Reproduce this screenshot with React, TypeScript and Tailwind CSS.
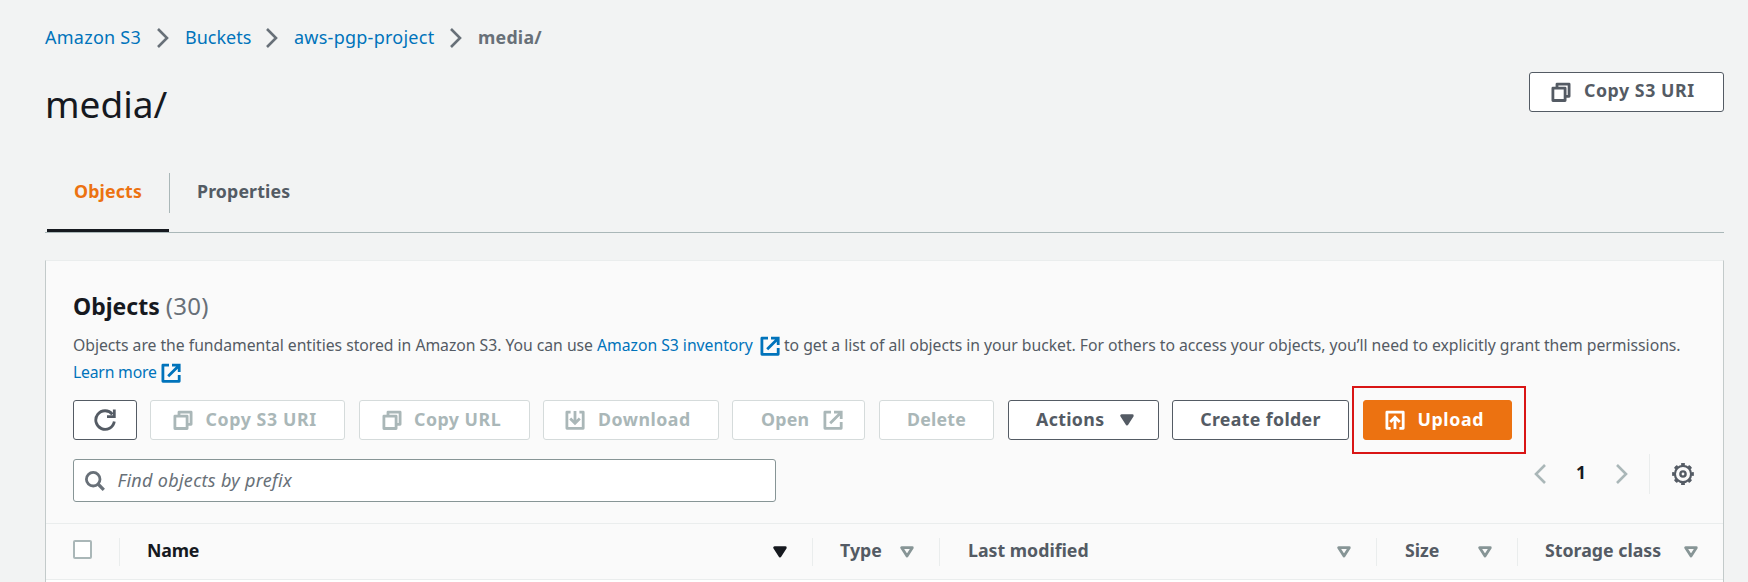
import type { ReactNode } from 'react';

type IconProps = { className?: string };

function Svg({ className = '', size = 20, box = 20, children }: IconProps & { size?: number; box?: number; children: ReactNode }) {
  return (
    <svg className={`shrink-0 ${className}`} width={size} height={size} viewBox={`0 0 ${box} ${box}`} fill="none" stroke="currentColor" strokeWidth={2.8}>
      {children}
    </svg>
  );
}

const CopyIcon = ({ className }: IconProps) => (
  <Svg className={className}>
    <path d="M6 5.6V2.2h12.1v12.1h-3.6" strokeLinejoin="round" />
    <path d="M1.9 6.2h12.2v12.3H1.9z" strokeLinejoin="round" />
  </Svg>
);

const ExternalIcon = ({ className }: IconProps) => (
  <Svg className={className}>
    <path d="M8 2.2H1.9v16.1h16.3V12" strokeLinejoin="round" />
    <path d="M11 2.2h7.2V9M7.2 13.2L18 2.4" />
  </Svg>
);

const DownloadIcon = ({ className }: IconProps) => (
  <Svg className={className}>
    <path d="M5.6 2.2H1.9v16.1h16.3V2.2h-3.8" strokeLinejoin="round" />
    <path d="M10 1v12M5.2 8.4l4.8 4.8 4.8-4.8" />
  </Svg>
);

const UploadIcon = ({ className }: IconProps) => (
  <Svg className={className}>
    <path d="M5.6 18.3H1.9V2.2h16.3v16.1h-3.8" strokeLinejoin="round" />
    <path d="M10 19V7.5M5.2 12l4.8-4.8 4.8 4.8" />
  </Svg>
);

const RefreshIcon = () => (
  <Svg size={22} box={22}>
    <path d="M20.3 12.5A9.3 9.3 0 1 1 18.4 5.3" />
    <path d="M20.3 0.5v7.2h-7.3" />
  </Svg>
);

const SearchIcon = ({ className }: IconProps) => (
  <Svg className={className}>
    <circle cx="8.2" cy="8.2" r="6.8" />
    <path d="M13 13l5.8 5.8" strokeWidth={3.2} />
  </Svg>
);

const GearIcon = () => (
  <Svg size={22} box={22}>
    <circle cx="11" cy="11" r="8.1" strokeWidth={2.2} />
    <circle cx="11" cy="11" r="9.8" strokeWidth={2.2} pathLength={80} strokeDasharray="5 5" strokeDashoffset={2.5} />
    <circle cx="11" cy="11" r="2.6" strokeWidth={2.4} />
  </Svg>
);

function Chevron({ flip = false, className = '' }: { flip?: boolean; className?: string }) {
  return (
    <svg className={`shrink-0 ${className}`} width="12" height="20" viewBox="0 0 12 20" fill="none" stroke="currentColor" strokeWidth="2.6">
      <path d={flip ? 'M11 1L2 10l9 9' : 'M1 1l9 9-9 9'} />
    </svg>
  );
}

function Caret({ hollow = false, className = '' }: { hollow?: boolean; className?: string }) {
  return (
    <svg className={`shrink-0 ${className}`} width="14" height="12" viewBox="0 0 14 12" fill={hollow ? 'none' : 'currentColor'} stroke="currentColor" strokeWidth="2.8" strokeLinejoin="round">
      <path d="M1.7 1.7h10.6L7 10z" />
    </svg>
  );
}

type ButtonProps = { variant?: 'normal' | 'disabled' | 'primary'; className: string; children: ReactNode };

function Button({ variant = 'normal', className, children }: ButtonProps) {
  const look = {
    normal: 'border-[#545b64] bg-white text-[#545b64]',
    disabled: 'border-[#d5dbdb] bg-white text-[#aab7b8]',
    primary: 'border-[#ec7211] bg-[#ec7211] text-white',
  }[variant];
  return (
    <button className={`flex h-10 shrink-0 items-center rounded-[3px] border text-[17.75px] leading-none font-bold whitespace-nowrap ${look} ${className}`}>
      {children}
    </button>
  );
}

function Crumb({ className, textClass = '', children }: { className: string; textClass?: string; children: ReactNode }) {
  return (
    <li className={`flex items-center justify-between ${className}`}>
      <a className={`pb-0.5 text-[#0073bb] ${textClass}`}>{children}</a>
      <Chevron className="mr-4 text-[#687078]" />
    </li>
  );
}

function HeaderCell({ className, textClass = '', active = false, last = false, children }: { className: string; textClass?: string; active?: boolean; last?: boolean; children: ReactNode }) {
  return (
    <div className={`flex h-7 items-center justify-between pl-[27px] ${last ? '' : 'border-r border-[#eaeded] pr-[25px]'} ${className}`}>
      <span className={`pb-px ${active ? 'text-[#16191f]' : 'text-[#545b64]'} ${textClass}`}>{children}</span>
      <Caret hollow={!active} className={active ? 'text-[#16191f]' : 'text-[#879596]'} />
    </div>
  );
}

export default function App() {
  return (
    <div className="flex h-[582px] w-[1748px] flex-col overflow-hidden bg-[#f2f3f3] pr-6 pl-[45px] font-['Noto_Sans','Open_Sans',sans-serif] text-[#16191f]">
      <nav className="h-[61px] pt-[25px]">
        <ol className="flex h-[26px] items-center text-[18px] leading-[26px] tracking-[0.25px] whitespace-nowrap">
          <Crumb className="w-[140px]">Amazon S3</Crumb>
          <Crumb className="w-[109px]" textClass="tracking-[0px]">Buckets</Crumb>
          <Crumb className="w-[184px]">aws-pgp-project</Crumb>
          <li className="pb-0.5 text-[17.75px] font-bold text-[#687078]">media/</li>
        </ol>
      </nav>

      <header className="flex h-[109px] items-start justify-between">
        <h1 className="pt-[19px] text-[37px] leading-[48px]">media/</h1>
        <Button className="mt-[11px] w-[195px] pl-[21px] tracking-[0.55px]">
          <CopyIcon />
          <span className="ml-[13px] pb-0.5">Copy S3 URI</span>
        </Button>
      </header>

      <div className="flex h-[63px] border-b border-[#aab7b8] pl-0.5 text-[17.75px] font-bold">
        <div className="flex w-[123px] flex-col justify-between">
          <div className="mt-[3px] flex h-10 items-center border-r border-[#aab7b8] pb-[3px] pl-[27px] leading-none tracking-[0.15px] text-[#ec7211]">Objects</div>
          <div className="h-[3px] w-[122px] bg-[#16191f]" />
        </div>
        <div className="mt-[3px] flex h-10 items-center pb-[3px] pl-[27px] leading-none tracking-[0.12px] text-[#545b64]">Properties</div>
      </div>

      <main className="mt-[27px] flex flex-1 flex-col border-x border-t border-x-[#c3caca] border-t-[#eaeded] bg-white">
        <section className="h-[263px] shrink-0 border-b border-[#eaeded] bg-[#fafafa] px-[27px]">
          <h2 className="pt-[29px] text-[23px] leading-8 font-bold">
            Objects <span className="text-[24px] font-normal tracking-[0.3px] text-[#687078]">(30)</span>
          </h2>
          <p className="mt-[10px] text-[15.75px] leading-[27px] tracking-[-0.03px] whitespace-nowrap text-[#545b64]">
            Objects are the fundamental entities stored in Amazon S3. You can use{' '}
            <a className="text-[#0073bb]">Amazon S3 inventory <ExternalIcon className="ml-[3px] inline-block align-[-5px]" /></a>
            {' '}to get a list of all objects in your bucket. For others to access your objects, you’ll need to explicitly grant them permissions.
            <br />
            <a className="text-[#0073bb]"><span className="tracking-[-0.2px]">Learn more</span> <ExternalIcon className="inline-block align-[-5px]" /></a>
          </p>

          <div className="mt-[14px] flex h-10">
            <Button className="w-16 justify-center"><RefreshIcon /></Button>
            <Button variant="disabled" className="ml-[13px] w-[195px] pl-[22px] tracking-[0.6px]">
              <CopyIcon /><span className="ml-[12.5px]">Copy S3 URI</span>
            </Button>
            <Button variant="disabled" className="ml-[14px] w-[171px] pl-[22px] tracking-[0.5px]">
              <CopyIcon /><span className="ml-[12px]">Copy URL</span>
            </Button>
            <Button variant="disabled" className="ml-[13px] w-[176px] pl-[21px] tracking-[0.5px]">
              <DownloadIcon /><span className="ml-[13px]">Download</span>
            </Button>
            <Button variant="disabled" className="ml-[13px] w-[133px] justify-between pr-[21px] pl-7 tracking-[0.2px]">
              <span>Open</span><ExternalIcon />
            </Button>
            <Button variant="disabled" className="ml-[14px] w-[115px] justify-center tracking-[0.2px]">Delete</Button>
            <Button className="ml-[14px] w-[151px] justify-between pr-6 pl-[27px] tracking-[0.35px]">
              <span>Actions</span><Caret />
            </Button>
            <Button className="ml-[13px] w-[177px] justify-center tracking-[0.35px]">Create folder</Button>
            <div className="-my-[14px] ml-[3px] flex h-[68px] w-[174px] items-center border-2 border-[#d91515] pl-[9px]">
              <Button variant="primary" className="w-[149px] pl-[21px] tracking-[0.6px]">
                <UploadIcon /><span className="ml-[12.5px]">Upload</span>
              </Button>
            </div>
          </div>

          <div className="mt-[19px] flex items-start justify-between">
            <div className="flex h-[43px] w-[703px] items-center rounded-[3px] border border-[#879596] bg-white pl-[11px] text-[#687078]">
              <SearchIcon />
              <span className="ml-[12.5px] pb-[2px] text-[18px] leading-none tracking-[0.3px] italic">Find objects by prefix</span>
            </div>
            <div className="-mt-[5px] flex h-10 items-center text-[#aab7b8]">
              <Chevron flip />
              <span className="ml-[29px] w-3 pb-[3px] text-center text-[17.5px] font-bold text-[#16191f]">1</span>
              <Chevron className="ml-[29px]" />
              <span className="ml-[21px] h-10 w-px bg-[#eaeded]" />
              <span className="mr-0.5 ml-[22px] text-[#545b64]"><GearIcon /></span>
            </div>
          </div>
        </section>

        <section className="flex h-14 shrink-0 items-center border-b border-[#eaeded] bg-[#fafafa] pr-[25px] pl-[27px] text-[17.75px] leading-none font-bold">
          <div className="flex h-7 w-[47px] items-center border-r border-[#eaeded] pb-[4px]">
            <span className="h-[19px] w-[19px] rounded-[2px] border-2 border-[#aab7b8] bg-white" />
          </div>
          <HeaderCell active className="w-[693px]" textClass="tracking-[-0.2px]">Name</HeaderCell>
          <HeaderCell className="w-[127px]">Type</HeaderCell>
          <HeaderCell className="w-[437px]" textClass="ml-px">Last modified</HeaderCell>
          <HeaderCell className="w-[141px]" textClass="ml-px">Size</HeaderCell>
          <HeaderCell last className="flex-1">Storage class</HeaderCell>
        </section>
      </main>
    </div>
  );
}
